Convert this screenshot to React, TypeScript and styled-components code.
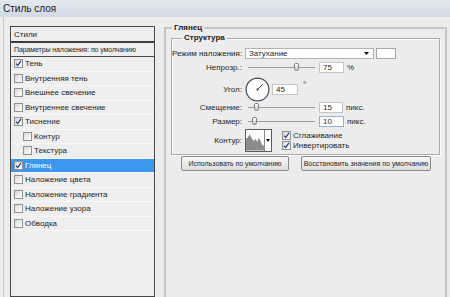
import React from 'react'
import styled, { createGlobalStyle } from 'styled-components'

const GlobalStyle = createGlobalStyle`
  html, body {
    margin: 0;
    padding: 0;
  }
  body {
    background: #ececec;
    font-family: "Liberation Sans", Arial, sans-serif;
    font-size: 8px;
    color: #1f1f1f;
  }
`

const Window = styled.div`
  width: 450px;
  height: 297px;
  display: flex;
  flex-direction: column;
  overflow: hidden;
  background: #ececec;
`

const TitleBar = styled.div`
  flex: none;
  height: 17px;
  display: flex;
  align-items: center;
  padding-left: 3px;
  font-size: 10px;
  color: #1a1a1a;
  background: linear-gradient(to bottom, #e2e8ef, #d0dae5);
`

const Body = styled.div`
  flex: 1;
  min-height: 0;
  display: flex;
  margin-left: 3px;
  border-left: 1px solid #c4c4c4;
`

// left list of effects
const Sidebar = styled.div`
  flex: none;
  width: 145px;
  box-sizing: border-box;
  margin: 9px 0 0 6px;
  border: 1px solid #474747;
  background: #eeeeee;
  display: flex;
  flex-direction: column;
`

const SidebarHeader = styled.div`
  height: 14px;
  display: flex;
  align-items: center;
  padding-left: 3px;
  border-bottom: 2px solid #3f3f3f;
`

const SidebarDefaults = styled.div`
  height: 13px;
  display: flex;
  align-items: center;
  padding-left: 3px;
  white-space: nowrap;
  font-size: 7px;
  letter-spacing: -0.1px;
  border-bottom: 1px solid #4a4a4a;
`

type RowProps = {
  $selected?: boolean
  $indent?: boolean
}

const SidebarRow = styled.div<RowProps>`
  height: 14.5px;
  box-sizing: border-box;
  display: flex;
  align-items: center;
  gap: 2px;
  padding-left: ${({ $indent }) => ($indent ? 12 : 3)}px;
  border-bottom: 1px solid #f7f7f7;
  background: ${({ $selected }) => ($selected ? '#3b96ee' : 'transparent')};
  color: ${({ $selected }) => ($selected ? '#ffffff' : '#1f1f1f')};
`

const CheckBox = styled.span`
  flex: none;
  width: 9px;
  height: 9px;
  box-sizing: border-box;
  border: 1px solid #8f9090;
  background: linear-gradient(135deg, #d9d9d9, #ffffff);
  display: flex;
  align-items: center;
  justify-content: center;
`

const Check = ({ checked }: { checked?: boolean }) => (
  <CheckBox>
    {checked && (
      <svg width="7" height="7" viewBox="0 0 7 7">
        <polyline points="1,3.6 2.7,5.6 6,0.8" fill="none" stroke="#22398c" strokeWidth="1.2" />
      </svg>
    )}
  </CheckBox>
)

// right side
const Content = styled.div`
  flex: none;
  width: 283px;
  margin: 6px 0 0 9px;
`

type GroupProps = { $inner?: boolean }

const GroupBox = styled.fieldset<GroupProps>`
  margin: 0;
  min-width: 0;
  box-sizing: border-box;
  display: flex;
  flex-direction: column;
  padding: ${({ $inner }) => ($inner ? '0 0 2px 0' : '0 5px')};
  height: ${({ $inner }) => ($inner ? 'auto' : '290px')};
  border: ${({ $inner }) => ($inner ? '1px solid #a9a9a9' : '2px solid #c6c6c6')};
  box-shadow: ${({ $inner }) => ($inner ? 'inset 1px 1px 0 #fbfbfb, 1px 1px 0 #fbfbfb' : 'none')};
`

const GroupLegend = styled.legend<{ $inset: number }>`
  padding: 0 2px;
  margin-left: ${({ $inset }) => $inset}px;
  font-weight: bold;
  font-size: 8px;
  line-height: 10px;
  color: #1a1a1a;
`

type FieldRowProps = { $h: number; $mt: number }

const FieldRow = styled.div<FieldRowProps>`
  display: flex;
  align-items: center;
  height: ${({ $h }) => $h}px;
  margin-top: ${({ $mt }) => $mt}px;
`

const FieldLabel = styled.span`
  flex: none;
  width: 70px;
  margin-right: 3px;
  text-align: right;
  white-space: nowrap;
`

const Select = styled.div`
  width: 129px;
  height: 11px;
  box-sizing: border-box;
  border: 1px solid #b3b3b3;
  background: #ffffff;
  display: flex;
  align-items: center;
  justify-content: space-between;
  padding: 0 4px 0 3px;
`

const Swatch = styled.div`
  width: 20px;
  height: 11px;
  box-sizing: border-box;
  margin-left: 2px;
  border: 1px solid #a6a6a6;
  background: #ffffff;
`

const Slider = styled.div`
  position: relative;
  width: 72px;
  height: 10px;
  flex: none;
`

const SliderTrack = styled.div`
  position: absolute;
  left: 3px;
  right: 2px;
  top: 5px;
  height: 1px;
  background: #9c9c9c;
`

const SliderThumb = styled.div`
  position: absolute;
  top: 1px;
  width: 5px;
  height: 8px;
  margin-left: -2.5px;
  box-sizing: border-box;
  border: 1px solid #7c7c7c;
  border-radius: 2px 2px 3px 3px;
  background: linear-gradient(to bottom, #fdfdfd, #c9c9c9);
`

const NumberInput = styled.div<{ $w: number; $focus?: boolean }>`
  flex: none;
  width: ${({ $w }) => $w}px;
  height: 11px;
  box-sizing: border-box;
  margin-left: 2px;
  padding-left: 3px;
  display: flex;
  align-items: center;
  background: #ffffff;
  border: 1px solid ${({ $focus }) => ($focus ? '#8fb4d9' : '#c4c4c4')};
`

const Unit = styled.span`
  margin-left: 3px;
`

const Degree = styled.span`
  align-self: flex-start;
  margin: 3px 0 0 5px;
`

const ContourBox = styled.div`
  flex: none;
  width: 27px;
  height: 23px;
  box-sizing: border-box;
  border: 1px solid #5a5a5a;
  background: #ffffff;
  display: flex;
`

const ContourArrow = styled.div`
  flex: none;
  width: 6px;
  border-left: 1px solid #8a8a8a;
  display: flex;
  align-items: center;
  justify-content: center;
`

const OptionList = styled.div`
  margin-left: 10px;
  align-self: flex-start;
  margin-top: 1px;
  display: flex;
  flex-direction: column;
`

const Option = styled.label`
  height: 10px;
  display: flex;
  align-items: center;
  gap: 2px;
`

const ButtonRow = styled.div`
  display: flex;
  gap: 12px;
  margin: 1px 0 0 10px;
`

const Button = styled.div<{ $w: number }>`
  width: ${({ $w }) => $w}px;
  height: 15px;
  box-sizing: border-box;
  display: flex;
  align-items: center;
  justify-content: center;
  border: 1px solid #8a8a8a;
  border-radius: 2px;
  background: linear-gradient(to bottom, #f6f6f6, #dedede);
  font-size: 7px;
  white-space: nowrap;
`

const SliderField = ({ pos }: { pos: number }) => (
  <Slider>
    <SliderTrack />
    <SliderThumb style={{ left: 3 + pos * 67 }} />
  </Slider>
)

const Dial = () => (
  <svg width="25" height="25" viewBox="0 0 25 25">
    <circle cx="12.5" cy="12.5" r="11.4" fill="#ffffff" stroke="#3f4858" strokeWidth="1.2" />
    <line x1="12.5" y1="12.5" x2="17.8" y2="7.2" stroke="#222" strokeWidth="0.9" />
    <circle cx="12.5" cy="12.5" r="1" fill="#222" />
  </svg>
)

const items = [
  { label: 'Тень', checked: true },
  { label: 'Внутренняя тень' },
  { label: 'Внешнее свечение' },
  { label: 'Внутреннее свечение' },
  { label: 'Тиснение', checked: true },
  { label: 'Контур', indent: true },
  { label: 'Текстура', indent: true },
  { label: 'Глянец', checked: true, selected: true },
  { label: 'Наложение цвета' },
  { label: 'Наложение градиента' },
  { label: 'Наложение узора' },
  { label: 'Обводка' },
]

export default function App() {
  return (
    <>
      <GlobalStyle />
      <Window>
        <TitleBar>Стиль слоя</TitleBar>
        <Body>
          <Sidebar>
            <SidebarHeader>Стили</SidebarHeader>
            <SidebarDefaults>Параметры наложения: по умолчанию</SidebarDefaults>
            {items.map(item => (
              <SidebarRow key={item.label} $selected={item.selected} $indent={item.indent}>
                <Check checked={item.checked} />
                {item.label}
              </SidebarRow>
            ))}
          </Sidebar>

          <Content>
            <GroupBox>
              <GroupLegend $inset={1}>Глянец</GroupLegend>
              <GroupBox $inner>
                <GroupLegend $inset={10}>Структура</GroupLegend>

                <FieldRow $h={11} $mt={5}>
                  <FieldLabel>Режим наложения:</FieldLabel>
                  <Select>
                    <span>Затухание</span>
                    <svg width="5" height="3" viewBox="0 0 5 3">
                      <polygon points="0,0 5,0 2.5,3" fill="#111" />
                    </svg>
                  </Select>
                  <Swatch />
                </FieldRow>

                <FieldRow $h={10} $mt={3}>
                  <FieldLabel>Непрозр.:</FieldLabel>
                  <SliderField pos={0.72} />
                  <NumberInput $w={25}>75</NumberInput>
                  <Unit>%</Unit>
                </FieldRow>

                <FieldRow $h={25} $mt={5}>
                  <FieldLabel>Угол:</FieldLabel>
                  <Dial />
                  <NumberInput $w={26}>45</NumberInput>
                  <Degree>°</Degree>
                </FieldRow>

                <FieldRow $h={10} $mt={0}>
                  <FieldLabel>Смещение:</FieldLabel>
                  <SliderField pos={0.13} />
                  <NumberInput $w={24}>15</NumberInput>
                  <Unit>пикс.</Unit>
                </FieldRow>

                <FieldRow $h={10} $mt={4}>
                  <FieldLabel>Размер:</FieldLabel>
                  <SliderField pos={0.1} />
                  <NumberInput $w={25} $focus>10</NumberInput>
                  <Unit>пикс.</Unit>
                </FieldRow>

                <FieldRow $h={23} $mt={3}>
                  <FieldLabel>Контур:</FieldLabel>
                  <ContourBox>
                    <svg width="19" height="21" viewBox="0 0 19 21">
                      <polygon
                        points="0,21 0,9 2,7 4,4 6,8 8,11 10,9 12,12 13,8 15,10 17,15 19,16 19,21"
                        fill="#8c8c8c"
                      />
                    </svg>
                    <ContourArrow>
                      <svg width="4" height="3" viewBox="0 0 4 3">
                        <polygon points="0,0 4,0 2,3" fill="#111" />
                      </svg>
                    </ContourArrow>
                  </ContourBox>
                  <OptionList>
                    <Option>
                      <Check checked />
                      Сглаживание
                    </Option>
                    <Option>
                      <Check checked />
                      Инвертировать
                    </Option>
                  </OptionList>
                </FieldRow>
              </GroupBox>

              <ButtonRow>
                <Button $w={108}>Использовать по умолчанию</Button>
                <Button $w={130}>Восстановить значения по умолчанию</Button>
              </ButtonRow>
            </GroupBox>
          </Content>
        </Body>
      </Window>
    </>
  )
}
